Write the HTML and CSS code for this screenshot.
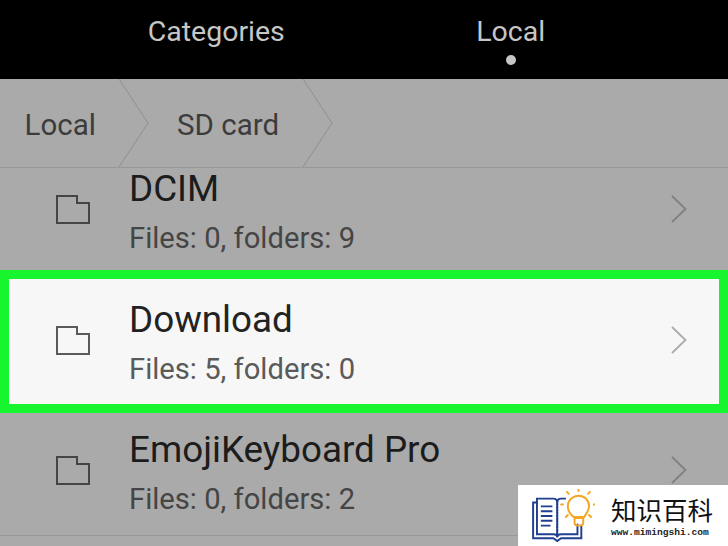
FILE: index.html
```html
<!DOCTYPE html>
<html lang="en">
<head>
<meta charset="utf-8">
<title>File manager</title>
<link rel="stylesheet" href="styles.css">
</head>
<body>
<div class="screen">
  <header class="tabs">
    <div class="tab"><span>Categories</span></div>
    <div class="tab"><span>Local</span><i class="dot"></i></div>
  </header>
  <nav class="crumbs">
    <span class="crumb first">Local</span>
    <svg class="sep" viewBox="0 0 30 88"><path d="M0 0L29 44L0 88"/></svg>
    <span class="crumb second">SD card</span>
    <svg class="sep" viewBox="0 0 30 88"><path d="M0 0L29 44L0 88"/></svg>
  </nav>
  <div class="list">
    <div class="rows">
      <div class="row">
        <svg class="folder" viewBox="0 0 34 29"><path d="M1 1H21V8H33V28H1Z"/></svg>
        <div class="info"><div class="name">DCIM</div><div class="meta">Files: 0, folders: 9</div></div>
        <svg class="arrow" viewBox="0 0 16 28"><path d="M1 1L14.5 14L1 27"/></svg>
      </div>
      <div class="row active">
        <svg class="folder" viewBox="0 0 34 29"><path d="M1 1H21V8H33V28H1Z"/></svg>
        <div class="info"><div class="name">Download</div><div class="meta">Files: 5, folders: 0</div></div>
        <svg class="arrow" viewBox="0 0 16 28"><path d="M1 1L14.5 14L1 27"/></svg>
      </div>
      <div class="row">
        <svg class="folder" viewBox="0 0 34 29"><path d="M1 1H21V8H33V28H1Z"/></svg>
        <div class="info"><div class="name">EmojiKeyboard Pro</div><div class="meta">Files: 0, folders: 2</div></div>
        <svg class="arrow" viewBox="0 0 16 28"><path d="M1 1L14.5 14L1 27"/></svg>
      </div>
    </div>
  </div>
  <aside class="brand">
    <svg class="brand-icon" viewBox="0 0 66 56">
      <g fill="none" stroke="#1f3f8f">
        <path stroke-width="2" d="M5 14H2V51H23L27 54L31 51H52V38"/>
        <path stroke-width="2" d="M6 47V10H23C26 10 27 12 27 14V50C27 48 25 47 23 47Z"/>
        <path stroke-width="2" d="M27 14C27 12 28 10 31 10H36M27 50C27 48 29 47 31 47H48V36"/>
        <path stroke-width="2" d="M10 18H22M10 23H22M10 28H22M10 33H22M10 38H20"/>
        <path stroke-width="2" stroke-dasharray="1.5 1.5" d="M27 12V50"/>
      </g>
      <g fill="none" stroke="#f5a623" stroke-width="2">
        <path d="M44 29C39 25 38 21 38 18C38 11 44 7 49 7C55 7 60 11 60 18C60 22 57 26 55 29Z"/>
        <path d="M45 30H54V35C54 37 52 38 49 38C47 38 45 37 45 35Z"/>
        <path stroke-linecap="round" d="M49 0V2M37 3L39 5M61 3L59 5M31 16H33M65 16H67M36 29L38 27M62 29L60 27"/>
      </g>
    </svg>
    <div class="brand-text">
      <div class="brand-name">知识百科</div>
      <div class="brand-url">www.mimingshi.com</div>
    </div>
  </aside>
</div>
</body>
</html>
```
FILE: styles.css
```css
* { box-sizing: border-box; }
html, body { margin: 0; padding: 0; }
body { width: 728px; height: 546px; overflow: hidden; font-family: Roboto, "Noto Sans", sans-serif; }
.screen { position: relative; width: 728px; height: 546px; background: #aaaaaa; display: flex; flex-direction: column; overflow: hidden; }

.tabs { flex: none; height: 79px; background: #000; display: flex; padding-left: 69px; }
.tab { width: 294.5px; display: flex; flex-direction: column; align-items: center; padding-top: 14px; color: #c6c6c6; font-size: 28.5px; line-height: 36px; }
.dot { width: 10px; height: 10px; border-radius: 50%; background: #c6c6c6; margin-top: 5px; }

.crumbs { flex: none; height: 89px; display: flex; align-items: center; border-bottom: 1px solid #979797; color: #3c3c3c; font-size: 29.5px; }
.crumb { padding-top: 4px; }
.crumb.first { width: 119px; padding-left: 24.5px; }
.crumb.second { width: 154px; padding-left: 28px; }
.sep { width: 30px; height: 88px; flex: none; }
.sep path { fill: none; stroke: #8f8f8f; stroke-width: 1; }

.list { flex: 1; min-height: 0; overflow: hidden; }
.rows { margin-top: -23.5px; }
.row { position: relative; height: 130.5px; display: flex; align-items: center; padding: 0 41px 0 56px; border-bottom: 1px solid #979797; }
.folder { width: 34px; height: 29px; flex: none; fill: none; stroke: #454545; stroke-width: 2; }
.info { flex: 1; margin-left: 40px; padding-top: 5px; }
.name { font-size: 36.8px; line-height: 44px; margin-left: -1px; color: #1c1c1c; }
.meta { font-size: 29.2px; line-height: 36px; margin-top: 9px; margin-left: -1px; color: #454545; }
.arrow { width: 16px; height: 28px; flex: none; fill: none; stroke: #808080; stroke-width: 1.8; }

.row.active { background: #f7f7f7; border-bottom: 0; }
.row.active::after { content: ""; position: absolute; left: 0; right: 0; top: -5px; bottom: -7px; border: 9px solid #17f52e; }
.row.active .name { color: #222; }
.row.active .meta { color: #5a5a5a; }
.row.active .folder { stroke: #5a5a5a; }
.row.active .arrow { stroke: #aaaaaa; }

.brand { position: absolute; right: 0; bottom: 0; width: 210px; height: 61px; background: #fff; display: flex; align-items: center; padding-left: 13px; }
.brand-icon { width: 64px; height: 54px; flex: none; }
.brand-text { margin-left: 16px; align-self: flex-start; margin-top: 5px; }
.brand-name { font-family: "Noto Sans CJK SC", sans-serif; font-size: 25.5px; line-height: 37px; color: #111; }
.brand-url { font-family: "Liberation Mono", monospace; font-size: 9.6px; line-height: 11px; color: #222; font-weight: bold; }
```
